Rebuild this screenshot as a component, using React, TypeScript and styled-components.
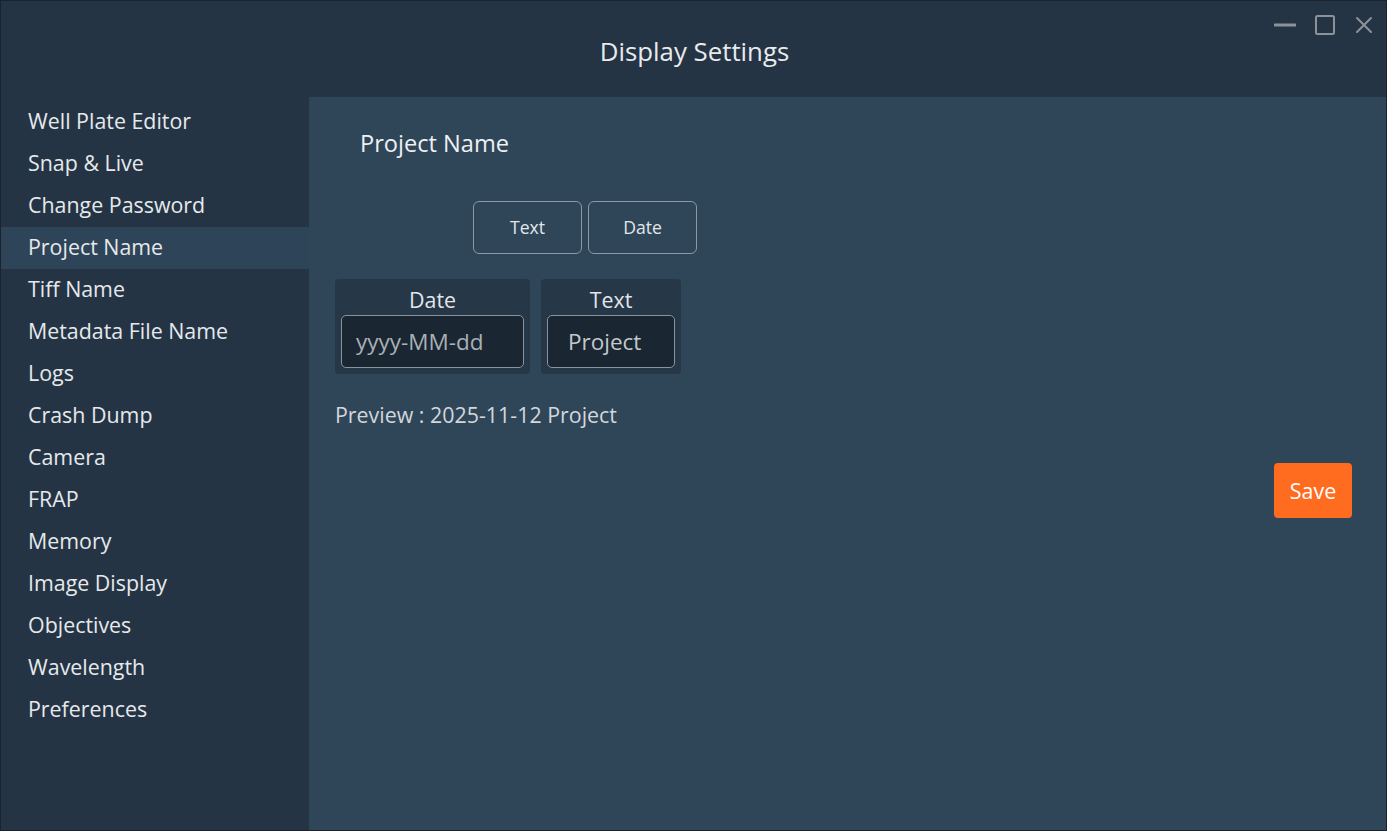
import React from "react";
import styled, { createGlobalStyle } from "styled-components";

const Global = createGlobalStyle`
  html, body { margin: 0; padding: 0; background: #1b2530; }
  body { font-family: "Open Sans", "Noto Sans", sans-serif; }
  * { box-sizing: border-box; }
`;

const Window = styled.div`
  width: 1387px;
  height: 831px;
  display: flex;
  flex-direction: column;
  background: #243445;
  border: 1px solid #1a232d;
  overflow: hidden;
`;

const TitleBar = styled.div`
  position: relative;
  height: 96px;
  flex: none;
  display: flex;
  align-items: center;
  justify-content: center;
  background: #243445;
`;

const Title = styled.div`
  color: #e8eaec;
  font-size: 25.8px;
  margin-top: 4px;
  margin-left: 2px;
`;

const Controls = styled.div`
  position: absolute;
  top: 12px;
  right: 12px;
  display: flex;
  align-items: center;
  gap: 18px;
`;

const Body = styled.div`
  flex: 1;
  display: flex;
  min-height: 0;
`;

const Sidebar = styled.nav`
  width: 308px;
  flex: none;
  padding-top: 4px;
  display: flex;
  flex-direction: column;
`;

const NavItem = styled.div<{ $active?: boolean }>`
  height: 42px;
  display: flex;
  align-items: center;
  padding: 0 0 3px 27px;
  font-size: 21.4px;
  color: #e6e9eb;
  background: ${(p) => (p.$active ? "#2e4458" : "transparent")};
`;

const Content = styled.main`
  flex: 1;
  position: relative;
  background: #2f4659;
  padding: 26px 0 0 26px;
`;

const Heading = styled.div`
  color: #eef0f2;
  font-size: 23.6px;
  margin-left: 25px;
  height: 40px;
  display: flex;
  align-items: center;
`;

const ButtonRow = styled.div`
  display: flex;
  gap: 6px;
  margin: 38px 0 0 138px;
`;

const OutlineButton = styled.button`
  width: 109px;
  height: 53px;
  border: 1.5px solid #8c98a3;
  border-radius: 6px;
  background: transparent;
  color: #e3e6e9;
  font-family: inherit;
  font-size: 17.6px;
  padding-bottom: 2px;
`;

const ChipRow = styled.div`
  display: flex;
  gap: 11px;
  margin-top: 25px;
`;

const Chip = styled.div<{ $w: number }>`
  width: ${(p) => p.$w}px;
  height: 95px;
  background: #263748;
  border-radius: 4px;
  padding: 6px;
  display: flex;
  flex-direction: column;
  align-items: stretch;
`;

const ChipLabel = styled.div`
  text-align: center;
  color: #e3e6e9;
  font-size: 21.4px;
  line-height: 30px;
  height: 30px;
`;

const Field = styled.div<{ $pad: number; $light?: boolean }>`
  height: 53px;
  border: 1.5px solid #8a939b;
  border-radius: 5px;
  background: #1a2631;
  display: flex;
  align-items: center;
  padding-left: ${(p) => p.$pad}px;
  color: ${(p) => (p.$light ? "#c3c8cd" : "#a9b0b6")};
  font-size: 22.5px;
`;

const Preview = styled.div`
  color: #d3d7db;
  font-size: 21.4px;
  margin-top: 26px;
`;

const SaveButton = styled.button`
  position: absolute;
  top: 366px;
  right: 34px;
  width: 78px;
  height: 55px;
  border: none;
  border-radius: 4px;
  background: #ff6b1f;
  color: #ffffff;
  font-family: inherit;
  font-size: 21.4px;
  padding-bottom: 2px;
`;

const items = [
  "Well Plate Editor",
  "Snap & Live",
  "Change Password",
  "Project Name",
  "Tiff Name",
  "Metadata File Name",
  "Logs",
  "Crash Dump",
  "Camera",
  "FRAP",
  "Memory",
  "Image Display",
  "Objectives",
  "Wavelength",
  "Preferences",
];

export default function App() {
  return (
    <>
      <Global />
      <Window>
        <TitleBar>
          <Title>Display Settings</Title>
          <Controls>
            <svg width="22" height="24" viewBox="0 0 22 24">
              <line x1="1" y1="12" x2="21" y2="12" stroke="#8d9298" strokeWidth="3" strokeLinecap="round" />
            </svg>
            <svg width="22" height="24" viewBox="0 0 22 24">
              <rect x="2" y="3" width="18" height="18" rx="1.5" fill="none" stroke="#8d9298" strokeWidth="2" />
            </svg>
            <svg width="20" height="24" viewBox="0 0 20 24">
              <path d="M3 5 L17 19 M17 5 L3 19" stroke="#8d9298" strokeWidth="2" strokeLinecap="round" />
            </svg>
          </Controls>
        </TitleBar>
        <Body>
          <Sidebar>
            {items.map((it) => (
              <NavItem key={it} $active={it === "Project Name"}>
                {it}
              </NavItem>
            ))}
          </Sidebar>
          <Content>
            <Heading>Project Name</Heading>
            <ButtonRow>
              <OutlineButton>Text</OutlineButton>
              <OutlineButton>Date</OutlineButton>
            </ButtonRow>
            <ChipRow>
              <Chip $w={195}>
                <ChipLabel>Date</ChipLabel>
                <Field $pad={14}>yyyy-MM-dd</Field>
              </Chip>
              <Chip $w={140}>
                <ChipLabel>Text</ChipLabel>
                <Field $pad={20} $light>Project</Field>
              </Chip>
            </ChipRow>
            <Preview>Preview : 2025-11-12 Project</Preview>
            <SaveButton>Save</SaveButton>
          </Content>
        </Body>
      </Window>
    </>
  );
}
